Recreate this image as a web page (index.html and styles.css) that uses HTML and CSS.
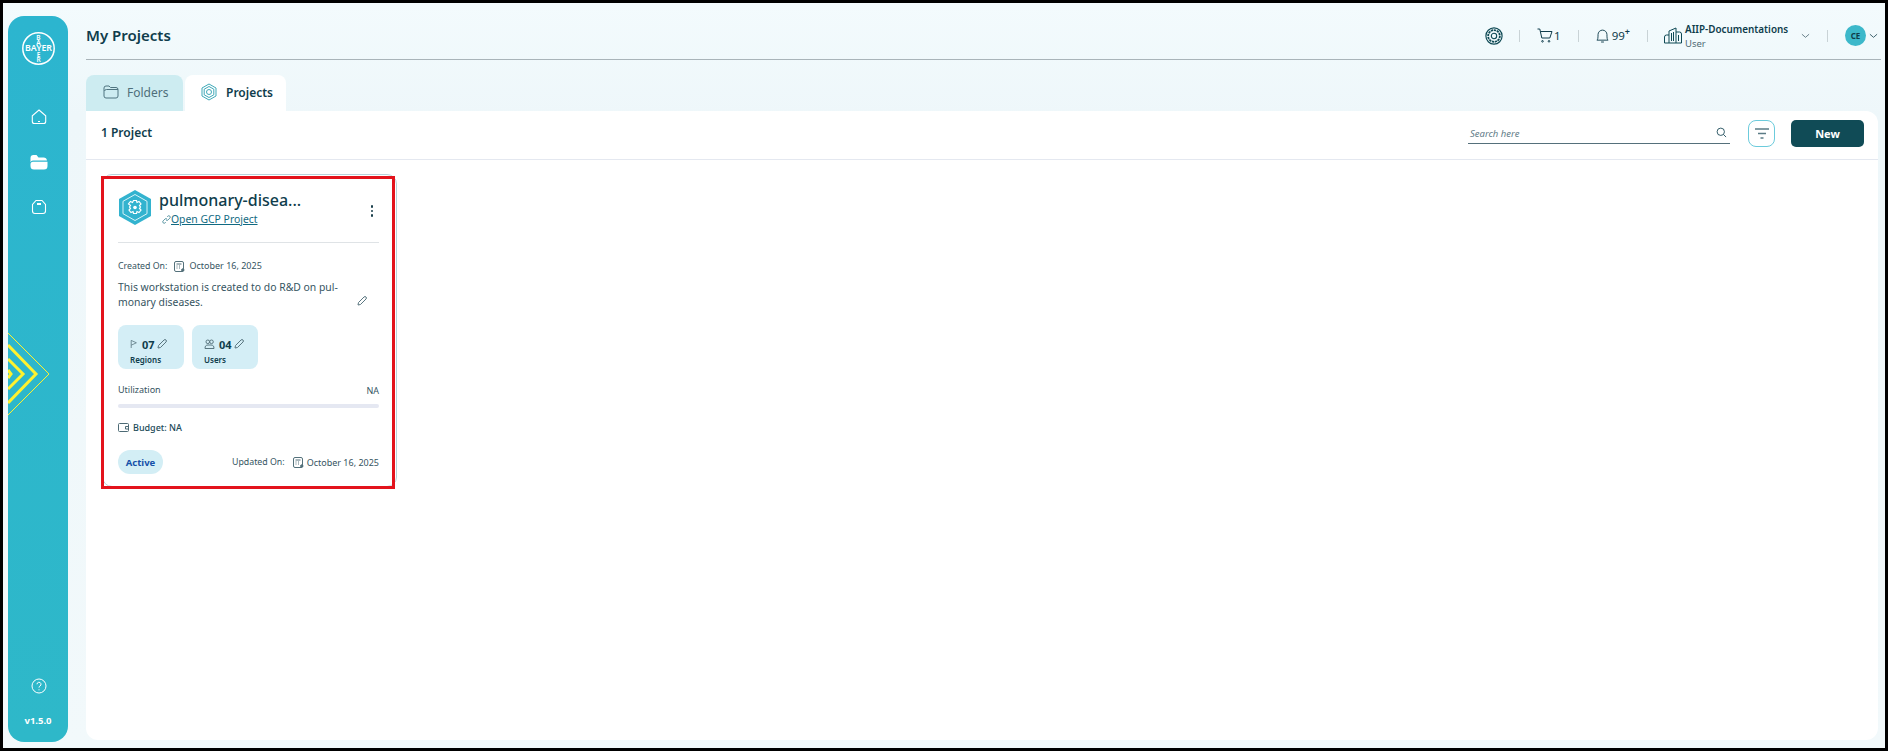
FILE: index.html
```html
<!DOCTYPE html>
<html lang="en">
<head>
<meta charset="utf-8">
<title>My Projects</title>
<link rel="stylesheet" href="styles.css">
</head>
<body>
<div class="app">
  <aside class="sidebar">
    <svg class="chevrons" viewBox="0 0 50 84" width="50" height="84" fill="none" stroke="#fff22e">
      <path d="M0 1 L41 42 L0 83" stroke-width="1"/>
      <path d="M0 13 L28 42 L0 71" stroke-width="3"/>
      <path d="M0 27 L15 42 L0 57" stroke-width="3"/>
      <path d="M0 38 L3 42 L0 46" stroke-width="3"/>
    </svg>
    <svg class="logo" viewBox="0 0 33 33">
      <circle cx="16.500" cy="16.500" r="15.700" fill="none" stroke="#fff" stroke-width="1.500"/>
      <text class="logo-v" x="16.500" y="7.800">B</text>
      <text class="logo-v" x="16.500" y="13.200">A</text>
      <text class="logo-h" x="16.500" y="19.400">BAYER</text>
      <text class="logo-v" x="16.500" y="25">E</text>
      <text class="logo-v" x="16.500" y="30.200">R</text>
    </svg>
    <nav class="side-nav">
      <svg class="side-icon" viewBox="0 0 16 16" fill="none" stroke="#fff" stroke-width="1.100"><path d="M8 1 14.700 6.800v5.700a2 2 0 0 1-2 2H3.300a2 2 0 0 1-2-2V6.800Z"/><path d="M7 12.500h2"/></svg>
      <svg class="side-folder" viewBox="0 0 18 16" fill="#fff"><path d="M.5 4A3 3 0 0 1 3.500 1h3l2 2.500h5A3.500 3.500 0 0 1 17 6.500H3a2.500 2.500 0 0 0-2.500 2Z"/><path d="M3 7.700h14.500V12a3.500 3.500 0 0 1-3.500 3.500H4A3.500 3.500 0 0 1 .5 12v-1.800A2.500 2.500 0 0 1 3 7.700Z"/></svg>
      <svg class="side-icon" viewBox="0 0 16 16" fill="none" stroke="#fff" stroke-width="1.100"><path d="M5 1.500h6l3.500 4v6.500a2.500 2.500 0 0 1-2.500 2.500H4A2.500 2.500 0 0 1 1.500 12V5.500Z"/><path d="M6 5h4" stroke-width="2"/></svg>
    </nav>
    <div class="side-foot">
      <svg class="help" viewBox="0 0 16 16" fill="none" stroke="#fff" stroke-width="1"><circle cx="8" cy="8" r="7"/><path d="M6 6.300a2 2 0 1 1 3 1.700c-.7.400-1 .8-1 1.600"/><path d="M8 11.300v1"/></svg>
      <span class="version">v1.5.0</span>
    </div>
  </aside>

  <main class="main">
    <header class="topbar">
      <h1 class="page-title">My Projects</h1>
      <div class="top-actions">
        <svg class="top-target" viewBox="0 0 20 20" fill="none" stroke="#0f4a55"><circle cx="10" cy="10" r="9" stroke-width="1.300"/><circle cx="10" cy="10" r="6.500" stroke-width="2" stroke-dasharray="2.500 .8"/><circle cx="10" cy="10" r="3" stroke-width="1.200"/></svg>
        <span class="sep sep-target"></span>
        <span class="top-item">
          <svg class="top-cart" viewBox="0 0 16 15" fill="none" stroke="#0f3d4c"><path d="M.5 1h2.300l2 9h8l2.200-6.500H3.400"/><circle cx="5.500" cy="13.300" r=".8"/><circle cx="12" cy="13.300" r=".8"/></svg>
          <span class="top-num">1</span>
        </span>
        <span class="sep sep-cart"></span>
        <span class="top-item top-item-bell">
          <svg class="top-bell" viewBox="0 0 14 17" fill="none" stroke="#0f3d4c"><path d="M1 13.500c1-1 1.200-2 1.200-6a4.800 4.800 0 0 1 9.600 0c0 4 .2 5 1.200 6Z"/><path d="M5.500 15.500h3"/></svg>
          <span class="top-num">99<sup class="plus">+</sup></span>
        </span>
        <span class="sep sep-bell"></span>
        <svg class="top-org" viewBox="0 0 18 17" fill="none" stroke="#0f4a55"><path d="M5 16V4l7-3v15M12 5h3.500a2 2 0 0 1 2 2v9M5 8H2.500a2 2 0 0 0-2 2v6M.5 16h17M7.500 6v8M9.500 5v9M14.500 8v6"/></svg>
        <div class="org">
          <span class="org-name">AIIP-Documentations</span>
          <span class="org-role">User</span>
        </div>
        <svg class="chev chev-org" viewBox="0 0 10 6" fill="none" stroke="#5d7680"><path d="M1 1l4 3.500L9 1"/></svg>
        <span class="sep sep-org"></span>
        <span class="avatar">CE</span>
        <svg class="chev chev-user" viewBox="0 0 10 6" fill="none" stroke="#2f5560"><path d="M1 1l4 3.500L9 1"/></svg>
      </div>
    </header>

    <div class="tabs">
      <div class="tab tab-folders">
        <svg class="tab-icon" viewBox="0 0 16 14" fill="none" stroke="#4f7480"><path d="M1 11V3a2 2 0 0 1 2-2h3l1.500 1.500H13a2 2 0 0 1 2 2V11a2 2 0 0 1-2 2H3a2 2 0 0 1-2-2Z"/><path d="M1.500 6a2 2 0 0 1 2-1.500H15"/></svg>
        <span>Folders</span>
      </div>
      <div class="tab tab-projects">
        <svg class="tab-icon tab-icon-projects" viewBox="0 0 18 18" fill="none" stroke="#3fa9b8"><path d="M9 1l7 4v8l-7 4-7-4V5Z"/><path d="M9 3.500l4.800 2.700v5.600L9 14.500l-4.800-2.700V6.200Z"/><circle cx="9" cy="9" r="2.500"/></svg>
        <span>Projects</span>
      </div>
    </div>

    <section class="panel">
      <div class="toolbar">
        <span class="count">1 Project</span>
        <div class="tools">
          <label class="search">
            <span class="search-text">Search here</span>
            <svg class="search-icon" viewBox="0 0 12 12" fill="none" stroke="#23505d"><circle cx="5.200" cy="5.200" r="4"/><path d="M8.200 8.200 11 11"/></svg>
          </label>
          <button class="filter" type="button">
            <svg viewBox="0 0 14 11" width="14" height="11" fill="none" stroke="#5b7c86" stroke-width="1.500"><path d="M0 1h14M3 5.500h8M5.500 10h3"/></svg>
          </button>
          <button class="new" type="button">New</button>
        </div>
      </div>

      <div class="grid">
        <article class="card">
          <span class="annotation"></span>
          <div class="card-head">
            <svg class="hex" viewBox="0 0 34 35" fill="none">
              <path d="M17 0 33 9v17L17 35 1 26V9Z" fill="#33b3cf"/>
              <path d="M17 4.500 29 11.300v12.400L17 30.500 5 23.700V11.300Z" stroke="#d9f3f8"/>
              <path d="M15.500 10.500h3l.5 2 2-1 2 2.500-1.500 1.500 1 1.500-1 1.500 1.500 1.500-2 2.500-2-1-.5 2h-3l-.5-2-2 1-2-2.500 1.500-1.500-1-1.500 1-1.500L10.500 14l2-2.500 2 1Z" stroke="#fff" stroke-width="1.200"/>
              <circle cx="17" cy="17.500" r="1.800" fill="#fff"/>
            </svg>
            <div class="card-titles">
              <h2 class="card-title">pulmonary-disea...</h2>
              <div class="card-link">
                <svg class="link-icon" viewBox="0 0 10 10" fill="none" stroke="#4a8b9a"><path d="M4.500 5.500a1.500 1.500 0 0 0 2.200 0l2-2a1.500 1.500 0 0 0-2.200-2.200l-.8.800M5.500 4.500a1.500 1.500 0 0 0-2.200 0l-2 2a1.500 1.500 0 0 0 2.200 2.200l.8-.8"/></svg>
                <a class="gcp" href="#">Open GCP Project</a>
              </div>
            </div>
            <span class="kebab"><i></i><i></i><i></i></span>
          </div>

          <div class="created">
            <span>Created On:</span>
            <svg class="cal" viewBox="0 0 11 11" fill="none" stroke="#54717b"><rect x=".5" y=".5" width="9" height="10" rx="1.500"/><path d="M2.500 3h5M2.500 5h1M5 5h1M2.500 7h1M5 7h1"/><circle cx="8.800" cy="9" r="1.200" fill="#54717b"/></svg>
            <span class="date">October 16, 2025</span>
          </div>

          <div class="desc-row">
            <p class="desc">This workstation is created to do R&amp;D on pul-<br>monary diseases.</p>
            <svg class="pencil pencil-desc" viewBox="0 0 10 10" fill="none" stroke="#5a7680"><path d="M1 9l.5-2.500L7 1a1.200 1.200 0 0 1 2 2L3.500 8.500Z"/></svg>
          </div>

          <div class="chips">
            <div class="chip">
              <div class="chip-top">
                <svg class="chip-icon" viewBox="0 0 10 11" fill="none" stroke="#5a7680"><path d="M1.500 10.500V1l6.500 3-6.500 3"/></svg>
                <strong>07</strong>
                <svg class="pencil" viewBox="0 0 10 10" fill="none" stroke="#5a7680"><path d="M1 9l.5-2.500L7 1a1.200 1.200 0 0 1 2 2L3.500 8.500Z"/></svg>
              </div>
              <span class="chip-label">Regions</span>
            </div>
            <div class="chip">
              <div class="chip-top">
                <svg class="chip-icon chip-icon-users" viewBox="0 0 11 10" fill="none" stroke="#5a7680"><circle cx="3.800" cy="2.800" r="1.800"/><circle cx="7.500" cy="2.800" r="1.800"/><path d="M1 9.500c0-2.500 1-3.500 3-3.500h3c2 0 3 1 3 3.500Z"/></svg>
                <strong>04</strong>
                <svg class="pencil" viewBox="0 0 10 10" fill="none" stroke="#5a7680"><path d="M1 9l.5-2.500L7 1a1.200 1.200 0 0 1 2 2L3.500 8.500Z"/></svg>
              </div>
              <span class="chip-label">Users</span>
            </div>
          </div>

          <div class="util">
            <span>Utilization</span>
            <span class="util-na">NA</span>
          </div>
          <div class="bar"></div>

          <div class="budget">
            <svg class="wallet" viewBox="0 0 11 9" fill="none" stroke="#4d6a75"><rect x=".5" y=".5" width="10" height="8" rx="1"/><path d="M10.500 3.500H7.500v2.500h3"/></svg>
            <span>Budget: NA</span>
          </div>

          <div class="card-foot">
            <span class="status">Active</span>
            <div class="updated">
              <span>Updated On:</span>
              <svg class="cal" viewBox="0 0 11 11" fill="none" stroke="#54717b"><rect x=".5" y=".5" width="9" height="10" rx="1.500"/><path d="M2.500 3h5M2.500 5h1M5 5h1M2.500 7h1M5 7h1"/><circle cx="8.800" cy="9" r="1.200" fill="#54717b"/></svg>
              <span class="date">October 16, 2025</span>
            </div>
          </div>
        </article>
      </div>
    </section>
  </main>
</div>
</body>
</html>
```
FILE: styles.css
```css
* { box-sizing: border-box; }
html, body { margin: 0; height: 100%; overflow: hidden; }
body {
  font-family: "Noto Sans", "Open Sans", sans-serif;
  color: #0f3d4c;
  background: #000;
}
.app {
  height: 751px;
  border: 3px solid #000;
  background: linear-gradient(180deg, #f3fbfd 0%, #eef7fa 15%, #f2f9fb 100%);
  display: flex;
  padding: 13px 6px 6px 5px;
}
.sidebar {
  position: relative;
  width: 60px;
  flex: none;
  border-radius: 16px;
  background: linear-gradient(180deg, #2cb5cf 0%, #2eb8c9 100%);
  display: flex;
  flex-direction: column;
  align-items: center;
  overflow: hidden;
  padding-top: 16px;
}
.chevrons { position: absolute; left: 0; top: 316px; }
.logo { width: 33px; height: 33px; display: block; flex: none; margin-left: 1px; }
.logo text { fill: #fff; font-family: "Noto Sans", sans-serif; font-weight: 600; text-anchor: middle; }
.logo-h { font-size: 8.800px; }
.logo-v { font-size: 6.500px; }
.side-nav {
  display: flex;
  flex-direction: column;
  align-items: center;
  gap: 29px;
  margin-top: 44px;
  padding-left: 2px;
}
.side-icon { width: 16px; height: 16px; display: block; }
.side-folder { width: 18px; height: 16px; display: block; }
.side-foot {
  margin-top: auto;
  display: flex;
  flex-direction: column;
  align-items: center;
  gap: 20px;
  padding-bottom: 14px;
}
.help { width: 16px; height: 16px; display: block; margin-left: 3px; }
.version { font-size: 9.500px; font-weight: 700; color: #fff; line-height: 14px; }

.main {
  flex: 1;
  min-width: 0;
  margin-left: 18px;
  display: flex;
  flex-direction: column;
}
.topbar {
  height: 44px;
  flex: none;
  border-bottom: 1px solid #a9b4b9;
  display: flex;
  align-items: center;
  justify-content: space-between;
  margin-right: -2px;
  padding-bottom: 4px;
}
.page-title { margin: -2px 0 0; font-size: 15px; font-weight: 600; color: #0f3d4c; }
.top-actions { display: flex; align-items: center; padding-right: 3px; }
.top-target { width: 18px; height: 18px; display: block; }
.sep { width: 1px; height: 12px; background: #c9d3d6; }
.sep-target { margin: 0 17px 0 16px; }
.sep-cart { margin: 0 17px 0 17px; }
.sep-bell { margin: 0 16px 0 17px; }
.sep-org { margin: 0 17px 0 17px; }
.top-item { display: flex; align-items: center; gap: 1px; }
.top-item-bell { gap: 3px; }
.top-cart { width: 16px; height: 15px; display: block; }
.top-bell { width: 13px; height: 17px; display: block; }
.top-num { font-size: 11.500px; line-height: 16px; color: #0f3d4c; }
.plus { font-size: 9px; line-height: 0; vertical-align: 5px; font-weight: 600; }
.top-org { width: 18px; height: 17px; display: block; margin-right: 3px; }
.org { display: flex; flex-direction: column; width: 116px; }
.org-name { font-size: 9.900px; font-weight: 600; line-height: 15px; white-space: nowrap; }
.org-role { font-size: 9.500px; line-height: 13px; color: #4f6a75; }
.chev { width: 9px; height: 6px; display: block; }
.avatar {
  width: 21px;
  height: 21px;
  border-radius: 50%;
  background: #3cb8ca;
  color: #0f3d4c;
  font-size: 8px;
  font-weight: 700;
  display: flex;
  align-items: center;
  justify-content: center;
}
.chev-user { margin-left: 3px; }

.tabs { display: flex; gap: 2px; margin-top: 15px; height: 36px; flex: none; }
.tab {
  display: flex;
  align-items: center;
  gap: 8px;
  padding: 0 14px 2px 17px;
  border-radius: 8px 8px 0 0;
  font-size: 12px;
}
.tab-folders { width: 97px; background: #cdecf1; color: #4f6f7b; }
.tab-projects { width: 101px; background: #fff; font-weight: 600; padding-left: 15px; }
.tab-icon { width: 16px; height: 16px; display: block; flex: none; }
.tab-icon-projects { width: 18px; height: 18px; }

.panel {
  flex: 1;
  min-height: 0;
  background: #fff;
  border-radius: 0 12px 12px 12px;
  margin: 0 1px 2px 0;
  display: flex;
  flex-direction: column;
}
.toolbar {
  height: 49px;
  flex: none;
  border-bottom: 1px solid #e4e8f0;
  display: flex;
  align-items: center;
  justify-content: space-between;
  padding: 0 14px 0 15px;
}
.count { font-size: 12px; font-weight: 600; margin-top: -6px; }
.tools { display: flex; align-items: flex-start; margin-top: -3px; }
.search {
  width: 262px;
  height: 24px;
  padding: 4px 3px 0 2px;
  border-bottom: 1px solid #55707b;
  display: flex;
  align-items: center;
  justify-content: space-between;
}
.search-text { font-size: 9.500px; font-style: italic; color: #5f7c88; }
.search-icon { width: 11px; height: 11px; display: block; margin-top: -3px; }
.filter {
  width: 27px;
  height: 27px;
  margin-left: 18px;
  padding: 0;
  background: #fff;
  border: 1px solid #6ccbdc;
  border-radius: 8px;
  display: flex;
  align-items: center;
  justify-content: center;
}
.new {
  width: 73px;
  height: 27px;
  margin-left: 16px;
  border: 0;
  border-radius: 5px;
  background: #104b56;
  color: #fff;
  font: 700 11px "Noto Sans", sans-serif;
}

.grid { padding: 14px 16px; }
.card {
  position: relative;
  width: 295px;
  height: 313px;
  background: #fff;
  border: 1px solid #b7d3da;
  border-radius: 10px;
  padding: 15px 17px 0 15px;
}
.annotation {
  position: absolute;
  left: -2px;
  top: 1px;
  width: 294px;
  height: 313px;
  border: 3px solid #e3131c;
}
.card-head { display: flex; align-items: flex-start; height: 53px; border-bottom: 1px solid #dfe3e6; }
.hex { width: 34px; height: 35px; display: block; flex: none; }
.card-titles { margin-left: 7px; min-width: 0; }
.card-title { margin: 0; font-size: 16px; line-height: 20px; font-weight: 500; color: #0f3d4c; white-space: nowrap; }
.card-link { display: flex; align-items: center; margin-left: 3px; margin-top: 1px; }
.link-icon { width: 9px; height: 9px; display: block; }
.gcp { font-size: 10.400px; line-height: 16px; color: #116a82; }
.kebab { margin-left: auto; margin-top: 15px; margin-right: 6px; display: flex; flex-direction: column; gap: 2px; }
.kebab i { width: 2.500px; height: 2.500px; border-radius: 50%; background: #1a3f4b; display: block; }

.created {
  display: flex;
  align-items: center;
  font-size: 8.800px;
  line-height: 14px;
  margin-top: 16px;
  color: #355461;
}
.cal { width: 11px; height: 11px; display: block; margin: 0 4px 0 7px; flex: none; }
.date { font-size: 9px; }
.desc-row { display: flex; align-items: flex-end; justify-content: space-between; margin-top: 7px; padding-right: 12px; }
.desc { margin: 0; font-size: 10.400px; line-height: 15px; color: #355461; white-space: nowrap; }
.pencil { width: 10px; height: 10px; display: block; flex: none; }
.pencil-desc { margin-bottom: 4px; }

.chips { display: flex; gap: 8px; margin-top: 15px; }
.chip {
  width: 66px;
  height: 44px;
  background: #d4eef6;
  border-radius: 8px;
  padding: 11px 0 0 12px;
}
.chip-top { display: flex; align-items: center; height: 16px; }
.chip-top strong { font-size: 11px; font-weight: 700; color: #0f3d4c; margin-left: 4px; margin-right: 2px; }
.chip-icon { width: 8px; height: 10px; display: block; }
.chip-icon-users { width: 11px; }
.chip-label { display: block; font-size: 8px; font-weight: 600; line-height: 12px; margin-top: 2px; }

.util { display: flex; justify-content: space-between; font-size: 9px; line-height: 13px; margin-top: 14px; color: #355461; }
.util-na { margin-top: 1px; }
.bar { height: 4px; background: #e5e8f2; border-radius: 2px; margin-top: 7px; }
.budget { display: flex; align-items: center; gap: 4px; font-size: 9px; font-weight: 500; line-height: 13px; margin-top: 13px; color: #204a58; }
.wallet { width: 11px; height: 9px; display: block; }

.card-foot { display: flex; align-items: center; justify-content: space-between; margin-top: 16px; }
.status {
  width: 45px;
  height: 24px;
  border-radius: 12px;
  background: #d3eef5;
  color: #1550a8;
  font-size: 9.500px;
  font-weight: 700;
  display: flex;
  align-items: center;
  justify-content: center;
}
.updated { display: flex; align-items: center; font-size: 8.800px; color: #355461; }
.updated .cal { margin: 1px 3px 0 8px; }
```
